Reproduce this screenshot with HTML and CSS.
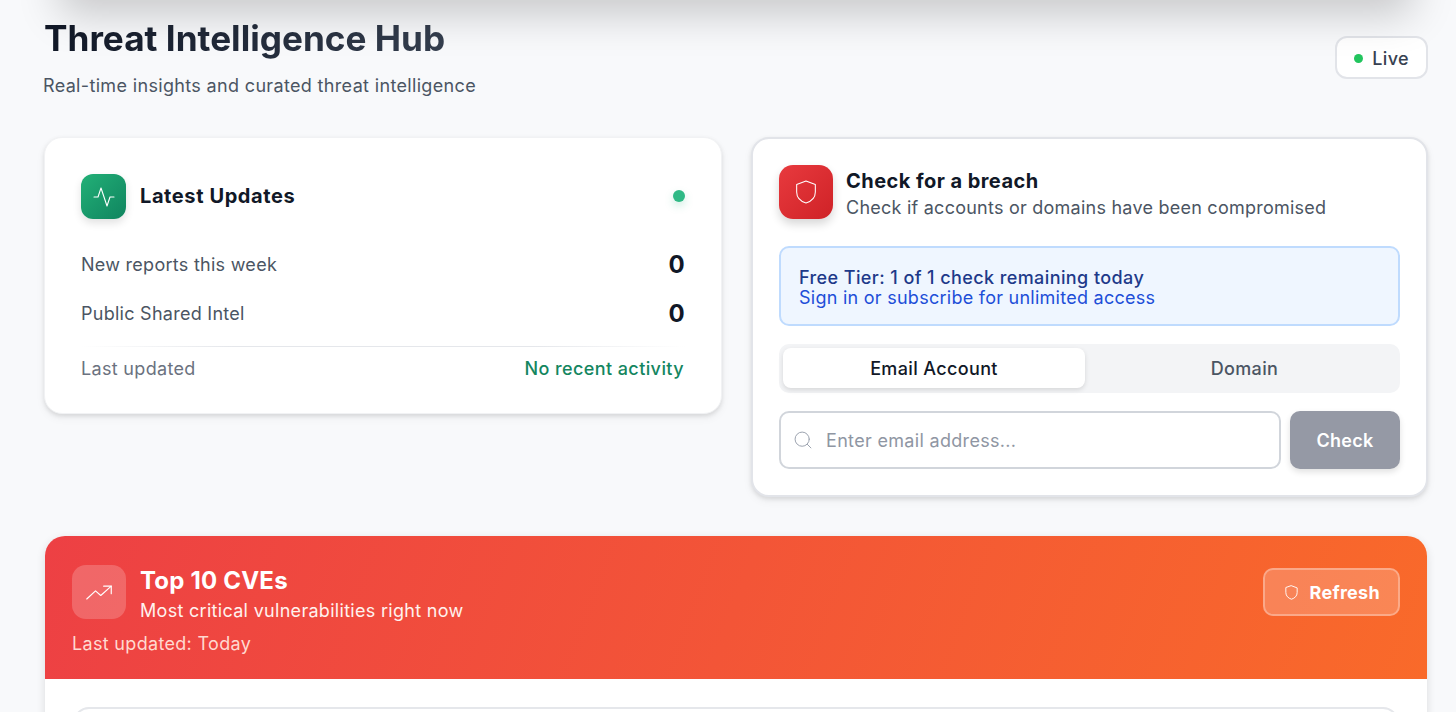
FILE: index.html
```html
<!DOCTYPE html>
<html lang="en">
<head>
    <meta charset="UTF-8">
    <meta name="viewport" content="width=device-width, initial-scale=1.0">
    <title>Threat Intelligence Hub</title>
    <link rel="stylesheet" href="styles.css">
</head>
<body>
    <div class="top-shadow"></div>

    <main class="page">
        <header class="page-header">
            <div>
                <h1 class="page-title">Threat Intelligence Hub</h1>
                <p class="page-subtitle">Real-time insights and curated threat intelligence</p>
            </div>
            <div class="live-badge"><span class="live-dot"></span>Live</div>
        </header>

        <div class="cards">
            <section class="card updates-card">
                <div class="updates-head">
                    <div class="icon-box icon-green">
                        <svg width="24" height="24" viewBox="0 0 24 24" fill="none" stroke="currentColor" stroke-width="1.1" stroke-linecap="round" stroke-linejoin="round"><path d="M22 12h-4l-3 9L9 3l-3 9H2"/></svg>
                    </div>
                    <h2 class="updates-title">Latest Updates</h2>
                    <span class="pulse-dot"></span>
                </div>
                <div class="stat-row"><span>New reports this week</span><strong>0</strong></div>
                <div class="stat-row"><span>Public Shared Intel</span><strong>0</strong></div>
                <div class="updated-row"><span>Last updated</span><span class="updated-value">No recent activity</span></div>
            </section>

            <section class="card breach-card">
                <div class="breach-head">
                    <div class="icon-box icon-red">
                        <svg width="28" height="28" viewBox="0 0 24 24" fill="none" stroke="currentColor" stroke-width="0.9" stroke-linecap="round" stroke-linejoin="round"><path d="M12 2.5l8 3v6.500c0 5-3.500 8-8 9.500-4.500-1.500-8-4.500-8-9.500V5.500z"/></svg>
                    </div>
                    <div class="breach-text">
                        <h2 class="breach-title">Check for a breach</h2>
                        <p class="breach-sub">Check if accounts or domains have been compromised</p>
                    </div>
                </div>

                <div class="tier-box">
                    <div class="tier-count">Free Tier: 1 of 1 check remaining today</div>
                    <a class="tier-link" href="#">Sign in or subscribe for unlimited access</a>
                </div>

                <div class="tabs">
                    <button class="tab tab-active">Email Account</button>
                    <button class="tab">Domain</button>
                </div>

                <div class="search-row">
                    <label class="search-field">
                        <svg width="20" height="20" viewBox="0 0 24 24" fill="none" stroke="currentColor" stroke-width="1.2" stroke-linecap="round" stroke-linejoin="round"><circle cx="11" cy="11" r="8.500"/><path d="M21.500 21.500l-4.300-4.300"/></svg>
                        <input class="search-input" type="text" placeholder="Enter email address...">
                    </label>
                    <button class="check-btn">Check</button>
                </div>
            </section>
        </div>

        <section class="cve-panel">
            <div class="cve-banner">
                <div>
                    <div class="cve-head">
                        <div class="icon-box icon-glass">
                            <svg width="28" height="28" viewBox="0 0 24 24" fill="none" stroke="currentColor" stroke-width="1" stroke-linecap="round" stroke-linejoin="round"><path d="M1.500 18l7.500-7 4.500 4L22.500 7"/><path d="M16 7h6.500v6.500"/></svg>
                        </div>
                        <div class="cve-text">
                            <h2 class="cve-title">Top 10 CVEs</h2>
                            <p class="cve-sub">Most critical vulnerabilities right now</p>
                        </div>
                    </div>
                    <p class="cve-updated">Last updated: Today</p>
                </div>
                <button class="refresh-btn">
                    <svg width="17" height="17" viewBox="0 0 24 24" fill="none" stroke="currentColor" stroke-width="1.300" stroke-linecap="round" stroke-linejoin="round"><path d="M12 2.500l8 3v6.500c0 5-3.500 8-8 9.500-4.500-1.500-8-4.500-8-9.500V5.500z"/></svg>
                    Refresh
                </button>
            </div>
            <div class="cve-body">
                <div class="cve-list"></div>
            </div>
        </section>
    </main>
</body>
</html>
```

FILE: styles.css
```css
* {
    box-sizing: border-box;
}

html, body {
    height: 712px;
    margin: 0;
    overflow: hidden;
}

body {
    position: relative;
    background-color: #f8f9fb;
    color: #111827;
    font-family: Inter, "Liberation Sans", sans-serif;
}

h1, h2, p {
    margin: 0;
}

/* card scrolled off the top, only its shadow shows */
.top-shadow {
    position: absolute;
    top: -200px;
    left: 44px;
    right: 28px;
    height: 200px;
    box-shadow: 0 30px 40px -16px rgba(0, 0, 0, 0.2);
}

.page {
    padding: 16px 28px 0 44px;
}

.page-header {
    display: flex;
    justify-content: space-between;
    align-items: center;
    margin-bottom: 39px;
}

.page-title {
    font-size: 35.2px;
    line-height: 44px;
    font-weight: 700;
    color: #1f2937;
    background: linear-gradient(90deg, #111827, #374151);
    -webkit-background-clip: text;
    background-clip: text;
    -webkit-text-fill-color: transparent;
}

.page-subtitle {
    margin-top: 14px;
    margin-left: -1px;
    font-size: 18px;
    line-height: 24px;
    letter-spacing: 0.34px;
    color: #4b5563;
}

.live-badge {
    display: flex;
    align-items: center;
    gap: 9px;
    height: 43px;
    padding: 2px 17px 0;
    border: 2px solid #e2e4e9;
    border-radius: 12px;
    background: #fff;
    font-size: 18px;
    font-weight: 500;
    letter-spacing: 0.36px;
    color: #374151;
}

.live-dot {
    width: 9px;
    height: 9px;
    border-radius: 50%;
    background: #22c55e;
}

.cards {
    display: grid;
    grid-template-columns: 678px 677px;
    justify-content: space-between;
    align-items: start;
    margin-bottom: 39px;
}

.card {
    background: #fff;
    border-radius: 18px;
    box-shadow: 0 2px 4px rgba(0, 0, 0, 0.1), 0 4px 10px rgba(0, 0, 0, 0.05);
}

.updates-card {
    height: 277px;
    padding: 36px 36px 0;
    border: 1px solid #f1f2f4;
}

.updates-head {
    display: flex;
    align-items: center;
    gap: 14px;
    margin-bottom: 21px;
}

.icon-box {
    display: flex;
    align-items: center;
    justify-content: center;
    flex-shrink: 0;
    color: #fff;
    border-radius: 12px;
}

.icon-green {
    width: 45px;
    height: 45px;
    background: linear-gradient(135deg, #22b077, #10845f);
    box-shadow: 0 4px 8px rgba(0, 0, 0, 0.12);
}

.icon-red {
    width: 54px;
    height: 54px;
    border-radius: 14px;
    background: linear-gradient(135deg, #e83a3e, #cf2227);
    box-shadow: 0 5px 10px rgba(0, 0, 0, 0.16);
}

.icon-glass {
    width: 54px;
    height: 54px;
    border-radius: 14px;
    background: rgba(255, 255, 255, 0.2);
}

.updates-title {
    flex: 1;
    padding-bottom: 2px;
    font-size: 20px;
    font-weight: 700;
    letter-spacing: 0.6px;
}

.pulse-dot {
    width: 12px;
    height: 12px;
    margin-bottom: 2px;
    border-radius: 50%;
    background: #2fb985;
    box-shadow: 0 4px 8px rgba(47, 185, 133, 0.25);
}

.stat-row {
    display: flex;
    justify-content: space-between;
    align-items: center;
    height: 49px;
    font-size: 18px;
    letter-spacing: 0.27px;
    color: #4b5563;
}

.stat-row strong {
    font-size: 24px;
    font-weight: 700;
    color: #111827;
}

/* line fades out at both ends */
.updated-row {
    display: flex;
    justify-content: space-between;
    align-items: center;
    margin-top: 8px;
    padding-top: 11px;
    background: linear-gradient(90deg, transparent, #e5e7eb 25%, #e5e7eb 75%, transparent) top / 100% 1px no-repeat;
    font-size: 18px;
    line-height: 24px;
    letter-spacing: 0.32px;
    color: #6b7280;
}

.updated-value {
    padding-right: 1px;
    font-weight: 500;
    letter-spacing: 0.41px;
    color: #14865f;
}

.breach-card {
    height: 360px;
    padding: 26px 26px 0;
    border: 2px solid #e2e4e9;
}

.breach-head {
    display: flex;
    align-items: flex-start;
    gap: 13px;
    margin-bottom: 25px;
}

.breach-text {
    padding-top: 3px;
}

.breach-title {
    font-size: 20px;
    line-height: 26px;
    font-weight: 700;
    letter-spacing: 0.45px;
}

.breach-sub {
    margin-top: 1px;
    font-size: 18px;
    line-height: 26px;
    letter-spacing: 0.24px;
    color: #4b5563;
}

.tier-box {
    display: flex;
    flex-direction: column;
    justify-content: center;
    height: 80px;
    padding: 4px 18px 0;
    margin-bottom: 18px;
    border: 2px solid #bfdbfe;
    border-radius: 10px;
    background: #eff6ff;
    font-size: 18px;
    line-height: 20px;
}

.tier-count {
    font-weight: 500;
    letter-spacing: 0.41px;
    color: #1e3a8a;
}

.tier-link {
    letter-spacing: 0.26px;
    color: #1d4ed8;
    text-decoration: none;
}

.tabs {
    display: grid;
    grid-template-columns: 302px 1fr;
    gap: 8px;
    height: 49px;
    padding: 4px;
    margin-bottom: 18px;
    border-radius: 10px;
    background: #f3f4f6;
}

.tab {
    height: 40px;
    border: 0;
    border-radius: 8px;
    background: transparent;
    font-family: inherit;
    font-size: 18px;
    font-weight: 500;
    letter-spacing: 0.36px;
    color: #4b5563;
}

.tab-active {
    background: #fff;
    color: #111827;
    box-shadow: 0 2px 5px rgba(0, 0, 0, 0.12);
}

.search-row {
    display: flex;
    gap: 9px;
    height: 58px;
}

.search-field {
    flex: 1;
    display: flex;
    align-items: center;
    gap: 11px;
    padding: 0 12px;
    border: 2px solid #d1d5db;
    border-radius: 10px;
    color: #9ca3af;
}

.search-input {
    flex: 1;
    min-width: 0;
    border: 0;
    outline: 0;
    background: transparent;
    font-family: inherit;
    font-size: 18px;
    letter-spacing: 0.32px;
}

.search-input::placeholder {
    color: #8f96a3;
}

.check-btn {
    width: 110px;
    border: 0;
    border-radius: 10px;
    background: #9599a5;
    font-family: inherit;
    font-size: 18px;
    font-weight: 600;
    letter-spacing: 0.3px;
    color: #fff;
    box-shadow: 0 3px 6px rgba(0, 0, 0, 0.12);
}

.cve-panel {
    margin-left: 1px;
    margin-right: 1px;
    border-radius: 20px;
    background: #fff;
    box-shadow: 0 3px 10px rgba(0, 0, 0, 0.12);
}

.cve-banner {
    display: flex;
    justify-content: space-between;
    align-items: flex-start;
    height: 143px;
    padding: 29px 27px 0;
    border-radius: 20px 20px 0 0;
    background: linear-gradient(110deg, #ed4044, #f96a2a);
    color: #fff;
}

.cve-head {
    display: flex;
    align-items: flex-start;
    gap: 14px;
}

.cve-text {
    padding-top: 1px;
}

.cve-title {
    font-size: 24px;
    line-height: 30px;
    font-weight: 700;
    letter-spacing: 0.2px;
}

.cve-sub {
    margin-top: 3px;
    font-size: 18px;
    line-height: 24px;
    letter-spacing: 0.3px;
    color: #fff2ee;
}

.cve-updated {
    margin-top: 9px;
    font-size: 18px;
    line-height: 24px;
    letter-spacing: 0.32px;
    color: #ffd9d0;
}

.refresh-btn {
    display: flex;
    align-items: center;
    gap: 10px;
    height: 48px;
    padding: 0 18px;
    margin-top: 3px;
    border: 2px solid rgba(255, 255, 255, 0.3);
    border-radius: 10px;
    background: rgba(255, 255, 255, 0.2);
    font-family: inherit;
    font-size: 18px;
    font-weight: 700;
    letter-spacing: 0.3px;
    color: #fff;
}

.cve-body {
    padding: 28px 28px 0;
}

.cve-list {
    height: 120px;
    border: 2px solid #e5e7eb;
    border-radius: 16px;
}
```
